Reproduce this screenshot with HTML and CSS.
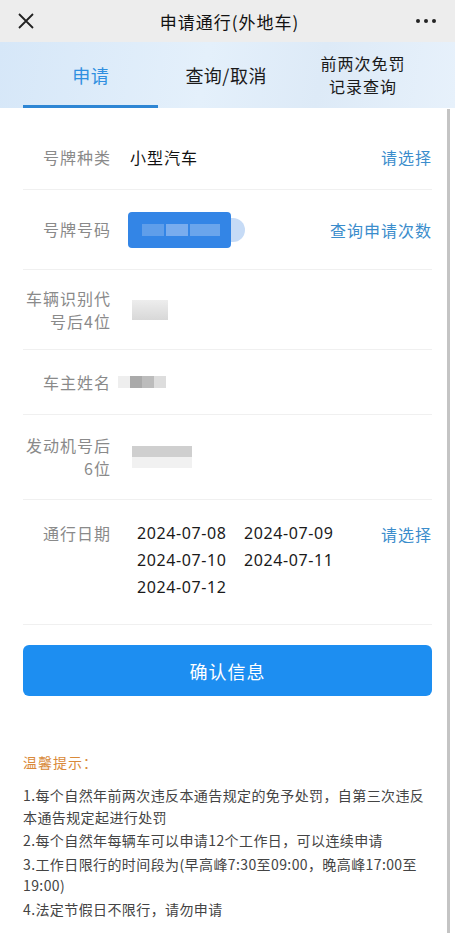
FILE: index.html
```html
<!DOCTYPE html>
<html lang="zh">
<head>
<meta charset="utf-8">
<link rel="stylesheet" href="styles.css">
</head>
<body>
<div class="page">
  <div class="topbar">
    <svg class="close" width="18" height="18" viewBox="0 0 18 18"><path d="M2 2L16 16M16 2L2 16" stroke="#222" stroke-width="1.8" fill="none"/></svg>
    <div class="title">申请通行(外地车)</div>
    <div class="more"><span></span><span></span><span></span></div>
  </div>
  <div class="tabs">
    <div class="tab active">申请</div>
    <div class="tab">查询/取消</div>
    <div class="tab small">前两次免罚<br>记录查询</div>
  </div>
  <div class="form">
    <div class="row r1">
      <div class="label">号牌种类</div>
      <div class="value">小型汽车</div>
      <div class="link">请选择</div>
    </div>
    <div class="row r2">
      <div class="label">号牌号码</div>
      <div class="value"><div class="plate"><span class="pb b1"></span><span class="pb b2"></span><span class="pb b3"></span></div><div class="plate-dot"></div></div>
      <div class="link">查询申请次数</div>
    </div>
    <div class="row r3">
      <div class="label">车辆识别代号后4位</div>
      <div class="value"><div class="blur blur-a"></div></div>
    </div>
    <div class="row r4">
      <div class="label">车主姓名</div>
      <div class="value"><div class="blur blur-b"><span></span><span></span><span></span><span></span></div></div>
    </div>
    <div class="row r5">
      <div class="label">发动机号后6位</div>
      <div class="value"><div class="blur blur-c"></div></div>
    </div>
    <div class="row r6">
      <div class="label">通行日期</div>
      <div class="value dates">
        <span>2024-07-08</span><span>2024-07-09</span>
        <span>2024-07-10</span><span>2024-07-11</span>
        <span>2024-07-12</span>
      </div>
      <div class="link">请选择</div>
    </div>
  </div>
  <div class="btn-wrap"><div class="btn">确认信息</div></div>
  <div class="tips">
    <div class="tips-title">温馨提示：</div>
    <p>1.每个自然年前两次违反本通告规定的免予处罚，自第三次违反本通告规定起进行处罚</p>
    <p>2.每个自然年每辆车可以申请12个工作日，可以连续申请</p>
    <p>3.工作日限行的时间段为(早高峰7:30至09:00，晚高峰17:00至19:00)</p>
    <p>4.法定节假日不限行，请勿申请</p>
  </div>
  <div class="scrollbar"></div>
</div>
</body>
</html>
```
FILE: styles.css
```css
* { box-sizing: border-box; }
html, body { margin: 0; padding: 0; }
body {
  width: 455px;
  height: 947px;
  overflow: hidden;
  background: #fff;
  font-family: "Noto Sans CJK SC", "Noto Sans", sans-serif;
}
.page { position: relative; height: 947px; }
.topbar {
  height: 42px;
  background: #ededed;
  display: flex;
  align-items: center;
  justify-content: space-between;
  padding: 0 17px 0 17px;
}
.close { display: block; }
.title {
  font-size: 17px;
  color: #111;
  font-weight: 400;
  letter-spacing: 1px;
  margin-left: 8px;
}
.more { display: flex; gap: 4px; padding-right: 2px; }
.more span { width: 4px; height: 4px; border-radius: 50%; background: #222; display: block; }
.tabs {
  height: 66px;
  background: linear-gradient(100deg, #d6e7f8 0%, #e4f0fb 45%, #ddeaf7 70%, #e7f1fb 100%);
  display: flex;
  padding: 0 23px;
  align-items: stretch;
}
.tab {
  flex: 1;
  display: flex;
  align-items: center;
  justify-content: center;
  text-align: center;
  font-size: 18px;
  letter-spacing: 0.5px;
  color: #1a1a1a;
  border-bottom: 3px solid transparent;
  padding-top: 3px;
}
.tab.active { color: #2f8fe0; border-bottom-color: #2e86d4; }
.tab.small { font-size: 16px; letter-spacing: 1px; line-height: 23px; flex: 1.02; }
.form { padding: 0 23px; }
.row {
  display: flex;
  align-items: center;
  border-bottom: 1px solid #f0f0f0;
}
.label {
  width: 88px;
  flex: none;
  text-align: right;
  font-size: 16px;
  letter-spacing: 1px;
  color: #8a8a8a;
  line-height: 23px;
  padding-left: 3px;
}
.value {
  flex: 1;
  margin-left: 19px;
  font-size: 16px;
  color: #111;
  letter-spacing: 1px;
  display: flex;
  align-items: center;
}
.link {
  font-size: 16px;
  letter-spacing: 1px;
  color: #3b8dcc;
  flex: none;
}
.r1 { height: 82px; padding-top: 17px; }
.r2 { height: 80px; }
.r3 { height: 80px; }
.r4 { height: 65px; }
.r5 { height: 85px; }
.r6 { height: 125px; align-items: flex-start; padding-top: 22px; }
.plate {
  width: 103px;
  height: 36px;
  border-radius: 4px;
  background: #3385e6;
  display: flex;
  align-items: center;
  padding-left: 14px;
  gap: 2px;
  margin-left: -2px;
}
.pb { height: 12px; background: #5f9eea; display: block; }
.b1 { width: 22px; }
.b2 { width: 22px; background: #78acee; }
.b3 { width: 30px; background: #6aa5ec; }
.plate-dot {
  width: 14px;
  height: 24px;
  border-radius: 0 12px 12px 0;
  background: #c6dbf6;
}
.blur { background: #dcdcdc; }
.blur-a { width: 36px; height: 20px; background: linear-gradient(#ededed, #d8d8d8); margin-left: 2px; }
.blur-b { display: flex; margin-left: -12px; height: 12px; }
.blur-b span { width: 12px; height: 12px; background: #eee; display: block; }
.blur-b span:nth-child(2) { background: #aaa; }
.blur-b span:nth-child(3) { background: #bcbcbc; }
.blur-b span:nth-child(4) { background: #ddd; }
.blur-c { width: 60px; height: 22px; margin-left: 2px; background: linear-gradient(#cfcfcf 0 50%, #f1f1f1 50% 100%); }
.dates {
  display: grid;
  grid-template-columns: 107px 100px;
  row-gap: 4px;
  font-family: "Noto Sans", "Open Sans", sans-serif;
  font-size: 16px;
  letter-spacing: 0.6px;
  color: #1a1a1a;
  line-height: 23px;
  margin-left: 26px;
  align-items: start;
}
.btn-wrap { padding: 20px 23px 0; }
.btn {
  height: 51px;
  border-radius: 6px;
  background: #1d8ef1;
  color: #fff;
  font-size: 18px;
  letter-spacing: 1px;
  display: flex;
  align-items: center;
  justify-content: center;
}
.tips { padding: 56px 23px 0 23px; }
.tips-title { color: #d98a3a; font-size: 14px; letter-spacing: 1px; margin-bottom: 13px; }
.tips p {
  margin: 0 0 2px 0;
  font-size: 14px;
  color: #444;
  line-height: 21.5px;
  letter-spacing: 0.4px;
}
.scrollbar {
  position: absolute;
  right: 5px;
  top: 109px;
  width: 3px;
  height: 824px;
  background: #c4c4c4;
}
```
